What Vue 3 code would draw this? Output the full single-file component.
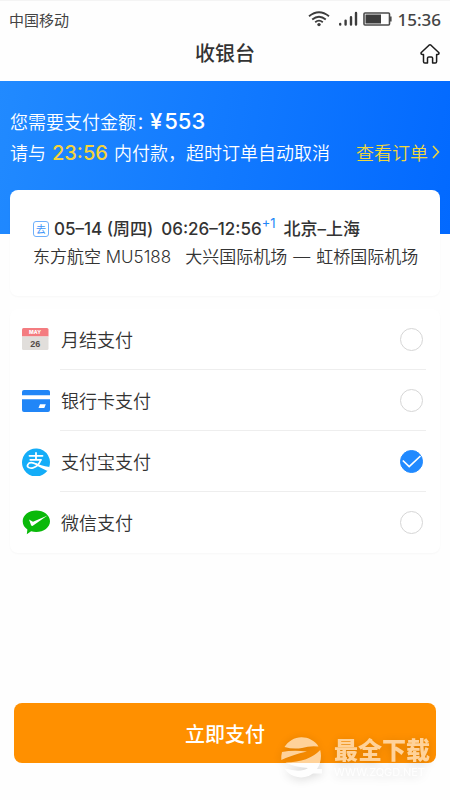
<script setup>
import { ref } from 'vue'

const methods = [
  { id: 'monthly', label: '月结支付' },
  { id: 'card', label: '银行卡支付' },
  { id: 'alipay', label: '支付宝支付' },
  { id: 'wechat', label: '微信支付' },
]
const selected = ref('alipay')
</script>

<template>
  <div class="page">
    <div class="status">
      <span class="carrier">中国移动</span>
      <div class="indicators">
        <svg class="wifi" width="22" height="16" viewBox="0 0 22 16" fill="none" stroke="#3c3c3c" stroke-width="1.8">
          <path d="M1 5.2Q11-2.8 21 5.2M4.2 8.5Q11 3 17.8 8.5M7.2 11.2Q11 8 14.8 11.2" />
          <circle cx="11" cy="13.6" r="1.7" fill="#3c3c3c" stroke="none" />
        </svg>
        <svg class="signal" width="20" height="16" viewBox="0 0 20 16" stroke="#3c3c3c" stroke-width="2.4" stroke-linecap="round">
          <path d="M2.2 13v.6M7.6 9.6v4M13 6.2v7.4M18 2v11.6" />
        </svg>
        <svg class="battery" width="29" height="14" viewBox="0 0 29 14">
          <rect x="1" y="1" width="25.5" height="12" rx="1" fill="none" stroke="#4a4a4a" stroke-width="1.6" />
          <path d="M2.5 2.5h15.5v9H2.5z" fill="#3c3c3c" />
          <path d="M27 4.5h1.6v5H27z" fill="#4a4a4a" />
        </svg>
        <span class="clock">15:36</span>
      </div>
    </div>

    <header class="header">
      <h1>收银台</h1>
      <button class="home" type="button" aria-label="首页">
        <svg width="20" height="20" viewBox="0 0 20 20" fill="none" stroke="#1c1c1c" stroke-width="1.5" stroke-linejoin="round">
          <path d="M9 1.2Q10 .4 11 1.2L18.7 8.5Q19.5 9.8 18 10.4H16.6V17.8Q16.5 19 15.3 19H12.6V14Q12.5 12.9 11.4 12.9H8.8Q7.6 12.9 7.5 14V19H4.8Q3.6 19 3.5 17.8V10.4H2Q.5 9.8 1.3 8.5Z" />
        </svg>
      </button>
    </header>

    <section class="banner">
      <div class="line amount">
        <span class="caption">您需要支付金额：</span>
        <span class="price"><span>¥</span>553</span>
      </div>
      <div class="line split">
        <p>请与<strong>23:56</strong>内付款，超时订单自动取消</p>
        <a href="#order">查看订单
          <svg width="8" height="14" viewBox="0 0 8 14" fill="none" stroke="currentColor" stroke-width="1.5"><path d="M1 1l5.5 6L1 13" /></svg>
        </a>
      </div>
    </section>

    <section class="flight">
      <p class="trip">
        <span class="tag">去</span>
        <span class="date">05–14 (周四)</span>
        <span class="time">06:26–12:56<sup>+1</sup></span>
        <span>北京–上海</span>
      </p>
      <p class="route">
        <span class="airline">东方航空 MU5188</span>
        <span>大兴国际机场</span>
        <span>—</span>
        <span>虹桥国际机场</span>
      </p>
    </section>

    <section class="methods">
      <label v-for="m in methods" :key="m.id" class="method">
        <svg v-if="m.id === 'monthly'" width="28" height="28" viewBox="0 0 28 28">
          <path d="M0 12h26.5v10.5q0 1.5-1.5 1.5H1.500q-1.500 0-1.500-1.500z" fill="#e1dedb" />
          <path d="M1.500 2h23.500q1.500 0 1.500 1.500V10.500H0V3.500Q0 2 1.500 2z" fill="#f47c80" />
          <path d="M0 10.500h26.500v2H0z" fill="#e1dedb" />
          <text class="month" x="13" y="8.400" text-anchor="middle">MAY</text>
          <text class="day" x="13.300" y="20.500" text-anchor="middle">26</text>
        </svg>
        <svg v-else-if="m.id === 'card'" width="28" height="28" viewBox="0 0 28 28" fill="#2186f7">
          <path d="M2 3h24q2 0 2 2v3.300H0V5q0-2 2-2z" />
          <path fill-rule="evenodd" d="M0 12.300h28V23q0 2-2 2H2q-2 0-2-2zM18 17.300l-1.500 3.700h5.800l1.500-3.700z" />
        </svg>
        <svg v-else-if="m.id === 'alipay'" width="28" height="28" viewBox="0 0 28 28">
          <path d="M27.100 19.500A14 14 0 1 1 28 14Q28 17 27.100 19.500z" fill="#14adf8" />
          <g fill="none" stroke="#fff" stroke-linecap="round">
            <path d="M7.500 7.800H20.500M14 5v6.500M8.300 11.800H19" stroke-width="1.800" />
            <path d="M18.700 12Q16.500 18.500 11 19.800C7 20.700 4.600 18.800 5.800 16.600C7.200 14.200 11 14.500 14.500 16.300" stroke-width="1.700" />
          </g>
          <path d="M13.500 14.900Q18 17.200 27.600 19Q27 21.500 25.500 23Q19.500 20.200 13.500 17z" fill="#fff" />
        </svg>
        <svg v-else width="28" height="28" viewBox="0 0 28 28">
          <path d="M14.200 1.500C6.800 1.500.7 6.200.7 12.200c0 3.400 1.800 6.300 4.700 8.200l-.6 4.800 4.300-2.900c1.600.5 3.300.7 5.100.7 7.500 0 13.800-4.800 13.800-10.800S21.700 1.500 14.200 1.500z" fill="#0ab90a" />
          <path d="M7 10.500l4 2.300L25.500 6.500 10.800 16.800Q9.500 17.200 9 16z" fill="#fff" />
        </svg>
        <span class="body">
          <span class="name">{{ m.label }}</span>
          <span class="radio">
            <input v-model="selected" type="radio" name="method" :value="m.id" />
            <svg v-if="selected === m.id" width="23" height="23" viewBox="0 0 23 23" fill="none" stroke="#fff" stroke-width="1.700">
              <path d="M2.800 10.500L9.200 16.500 20.500 6" />
            </svg>
          </span>
        </span>
      </label>
    </section>

    <footer class="footer">
      <button class="pay" type="button">立即支付</button>
      <div class="mark">
        <svg width="42" height="42" viewBox="0 0 42 42" fill="#fff">
          <path d="M3.500 10A20 20 0 0 1 37.500 9.500Q29 8.500 21 11Q12 12.500 3.500 10z" />
          <path d="M1 15Q12 12.800 26 14.500Q11 18 .3 23Q0 19 1 15z" />
          <path d="M39.200 13C41 20 39.500 27 36 32H41V36.500H32A20 20 0 0 1 3.500 31.500Q20 36 27 31Q14 30 4.500 25.500Q28 25 39.200 13z" />
        </svg>
        <div class="mark-text">
          <span class="mark-name">最全下载</span>
          <span class="mark-url">WWW.ZQGD.NET</span>
        </div>
      </div>
    </footer>
  </div>
</template>

<style>
body {
  margin: 0;
  background: #fefefe;
}
</style>

<style scoped>
.page {
  box-sizing: border-box;
  display: flex;
  flex-direction: column;
  min-height: 100vh;
  border-top: 1px solid #f4f4f4;
  color: #333;
  font-family: Inter, "Noto Sans CJK SC", sans-serif;
  font-size: 18px;
}
p,
h1 {
  margin: 0;
}
button {
  border: 0;
  padding: 0;
  font-family: inherit;
  cursor: pointer;
}
.status {
  display: flex;
  align-items: center;
  justify-content: space-between;
  height: 36px;
  padding: 0 9px;
}
.carrier {
  font-size: 15px;
  color: #444;
}
.indicators {
  display: flex;
  align-items: center;
}
.signal {
  margin-left: 8px;
}
.battery {
  margin: 0 5px;
}
.clock {
  font-family: "Noto Sans", sans-serif;
  font-size: 17px;
  font-weight: 500;
  color: #444;
}
.header {
  display: grid;
  grid-template-columns: 1fr auto 1fr;
  align-items: center;
  height: 32px;
  padding: 0 10px 12px;
}
h1 {
  grid-column: 2;
  font-size: 20px;
  line-height: 34px;
  font-weight: 500;
}
.home {
  justify-self: end;
  display: flex;
  background: none;
}
.banner {
  padding: 25px 10px 66px;
  background: linear-gradient(100deg, #218aff, #0269ff);
  color: #fff;
  font-weight: 350;
}
.line {
  display: flex;
  align-items: center;
  height: 30px;
  white-space: nowrap;
}
.line + .line {
  height: 32px;
}
.amount {
  gap: 5px;
}
.caption {
  font-feature-settings: "halt";
}
.price {
  font-size: 22px;
  font-weight: 500;
}
.price span {
  margin-right: 2px;
}
.split {
  justify-content: space-between;
}
strong {
  margin: 0 6px;
  font-size: 20px;
  font-weight: 500;
  color: #f5d33c;
}
.banner a {
  display: flex;
  align-items: center;
  gap: 4px;
  color: #f0d63c;
  text-decoration: none;
}
.flight {
  margin: -44px 10px 0;
  padding: 25px 20px 25px 23px;
  border-radius: 8px;
  background: #fff;
  box-shadow: 0 1px 2px #00000008;
  white-space: nowrap;
}
.trip,
.route {
  display: flex;
  align-items: center;
  height: 28px;
  font-size: 17px;
  line-height: 28px;
}
.trip {
  align-items: baseline;
  font-weight: 500;
}
.tag {
  box-sizing: border-box;
  align-self: center;
  width: 16px;
  height: 16px;
  margin-right: 5px;
  border: 1px solid #6fb0fb;
  border-radius: 3px;
  color: #3d94f8;
  font-size: 10px;
  font-weight: 400;
  line-height: 14px;
  text-align: center;
}
.date,
.time {
  margin-right: 8px;
}
sup {
  font-size: 13px;
  font-weight: 400;
  line-height: 0;
  color: #2186f7;
}
.route {
  gap: 6px;
  font-weight: 350;
}
.airline {
  margin-right: 8px;
}
.methods {
  margin: 13px 10px 0;
  border-radius: 8px;
  background: #fff;
  box-shadow: 0 1px 2px #00000008;
}
.method {
  display: flex;
  align-items: center;
  gap: 10px;
  padding: 0 14px 0 12px;
  cursor: pointer;
}
.body {
  flex: 1;
  box-sizing: border-box;
  display: flex;
  align-items: center;
  justify-content: space-between;
  height: 61px;
  padding: 0 3px 0 1px;
  border-bottom: 1px solid #eee;
}
.method:last-child .body {
  border-bottom-color: transparent;
}
.name {
  font-weight: 350;
}
.radio {
  display: grid;
}
.radio > * {
  grid-area: 1 / 1;
}
.radio svg {
  pointer-events: none;
}
.radio input {
  box-sizing: border-box;
  appearance: none;
  width: 23px;
  height: 23px;
  margin: 0;
  border: 1px solid #d6d6d6;
  border-radius: 50%;
}
.radio input:checked {
  border-color: #218aff;
  background: #218aff;
}
.month {
  fill: #fff;
  font-size: 5px;
  font-weight: 800;
}
.day {
  fill: #554c47;
  font-family: "Liberation Sans", sans-serif;
  font-size: 9px;
  font-weight: 700;
}
.footer {
  position: relative;
  margin-top: auto;
  padding: 16px 14px 37px;
}
.pay {
  width: 100%;
  height: 60px;
  border-radius: 8px;
  background: #ff9000;
  color: #fff;
  font-size: 20px;
  font-weight: 500;
}
.mark {
  position: absolute;
  right: 20px;
  bottom: 21px;
  display: flex;
  align-items: center;
  gap: 11px;
  color: #fff;
  opacity: 0.6;
  filter: drop-shadow(0 2px 5px #00000040);
  pointer-events: none;
}
.mark-text {
  display: flex;
  flex-direction: column;
}
.mark-name {
  font-size: 24px;
  font-weight: 900;
  line-height: 28px;
}
.mark-url {
  font-size: 11px;
  line-height: 14px;
}
</style>
